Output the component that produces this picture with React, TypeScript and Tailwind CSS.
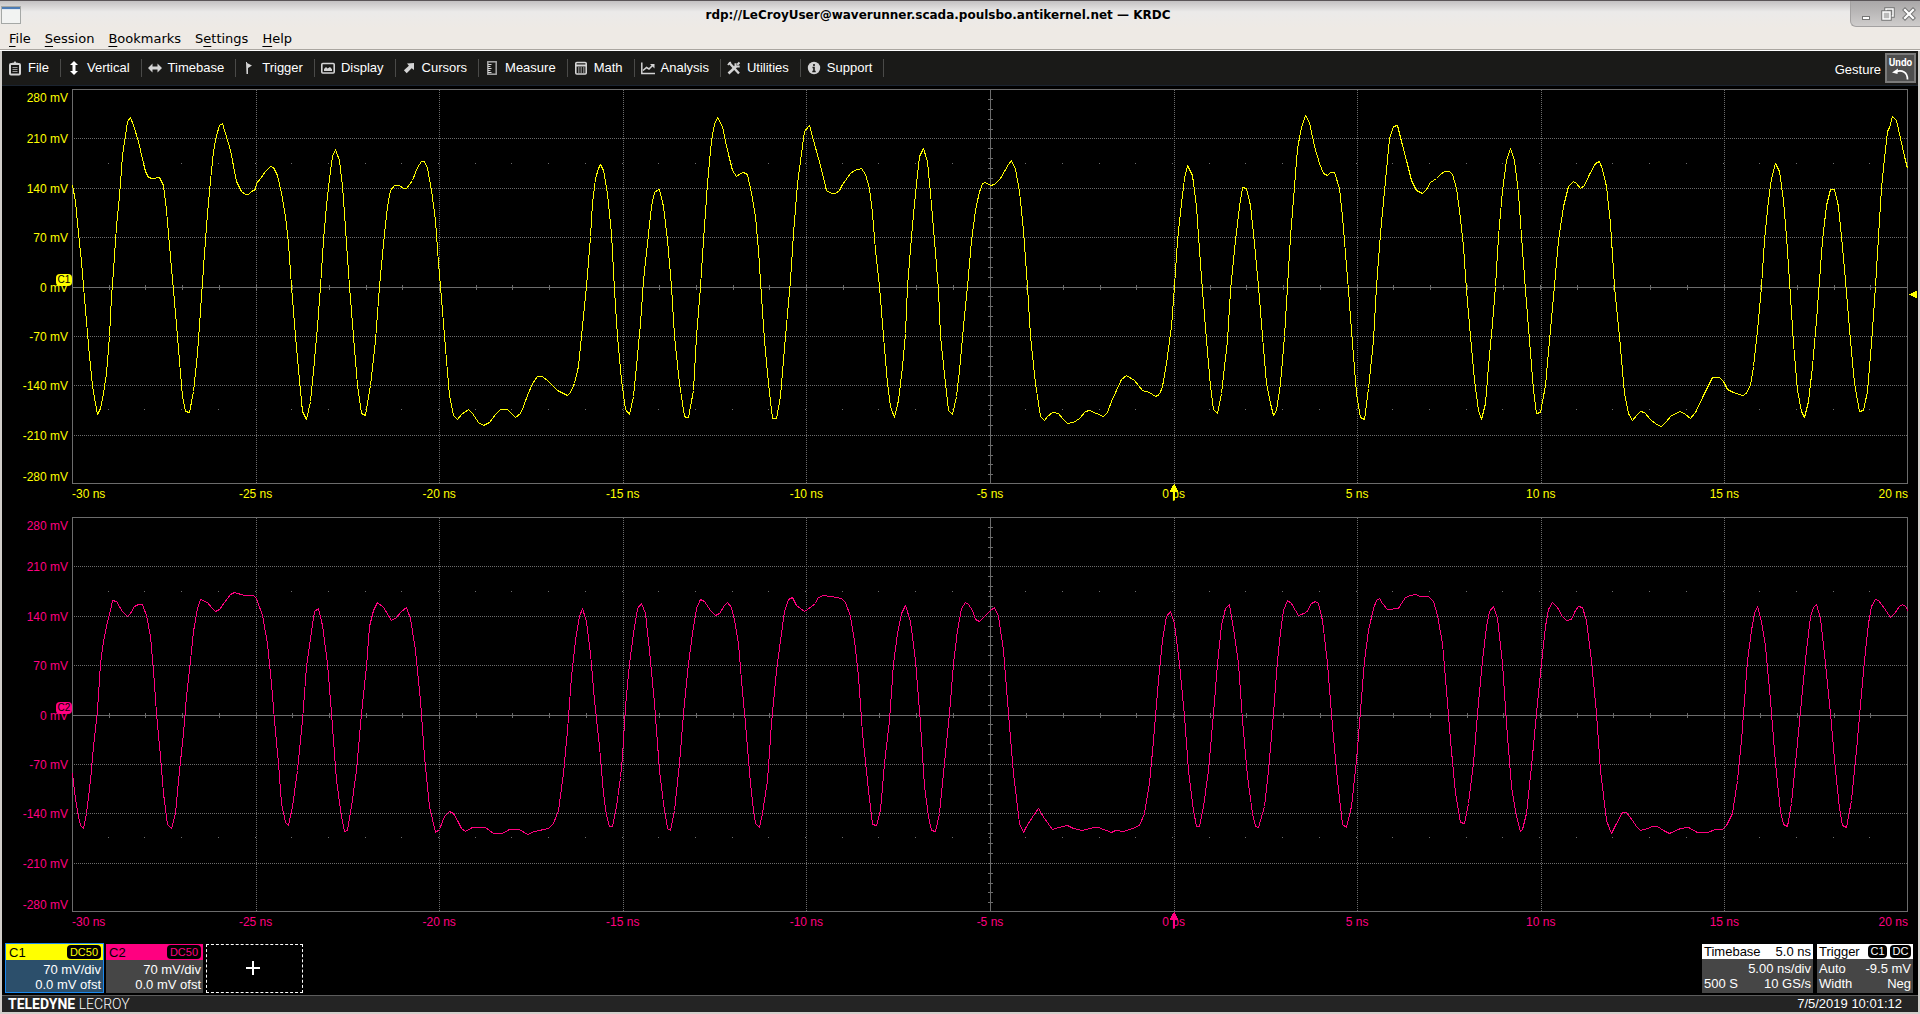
import type { ReactNode } from "react";

type Segment = { x: number; y: number; pitchX: number; pitchY: number; points: string };

const C1_TRACE: Segment[] = [
  {
    x: -12, y: 1, pitchX: 3, pitchY: 3,
    points:
      "37,287 46,335 55,430 64,515 70,590 79,695 88,800 97,885 106,940 113,972 121,955 130,910 138,850 147,740 154,620 160,540 169,410 178,320 187,195 195,135 203,95 211,83 221,105 235,155 250,220 257,245 266,262 278,265 298,262 309,285 319,360 328,465 340,600 352,740 360,850 368,920 377,964 388,967 400,905 411,790 423,620 432,490 441,370 450,270 459,185 468,135 477,105 486,100 497,130 510,180 530,275 543,303 555,314 564,312 575,304 587,297 589,280 600,265 615,245 630,229 641,232 652,255 664,310 675,380 685,460 694,590 706,740 717,870 728,965 739,988 751,935 760,845 771,710 781,590 790,450 799,345 808,265 818,200 826,177 838,210 847,290 853,370 860,460 869,590 881,740 892,885 904,970 915,976 931,885 946,750 958,590 969,460 982,350 992,300 1003,286 1018,287 1030,295 1040,294 1058,270 1072,232 1083,214 1093,214 1103,235 1115,300 1126,390 1135,520 1140,590 1150,700 1158,810 1168,915 1180,975 1192,987 1203,972 1225,959 1236,970 1255,998 1269,1005 1288,997 1305,972 1322,957 1343,957 1365,981",
  },
  {
    x: 448, y: 1, pitchX: 3, pitchY: 3,
    points:
      "0,970 10,950 22,915 38,880 53,859 68,860 85,874 111,900 143,915 152,908 163,880 174,830 184,740 199,590 211,440 218,340 227,265 235,235 241,222 250,240 262,310 273,430 284,600 293,740 305,870 317,958 328,972 340,920 350,830 360,700 371,570 382,460 393,350 404,308 414,297 418,298 430,350 441,450 453,590 464,740 478,880 493,980 500,982 506,982 519,900 530,740 541,590 550,450 561,280 575,150 584,103 593,81 607,108 617,155 628,205 638,242 650,259 660,250 670,246 682,252 695,310 706,380 715,480 724,620 734,750 746,880 758,984 768,985 782,920 797,740 810,570 820,430 831,280 843,190 853,123 868,107 880,150 900,225 920,300 935,310 947,310 958,302 968,284 990,250 1003,241 1023,236 1036,252 1048,295 1058,370 1067,480 1077,590 1090,740 1102,880 1112,950 1124,981 1136,930 1146,830 1156,730 1163,590 1174,440 1187,310 1199,200 1210,176 1222,215 1231,310 1243,450 1254,600 1262,740 1275,880 1286,960 1297,972 1309,920 1319,840 1330,710 1342,590 1355,450 1366,360 1378,305",
  },
  {
    x: 908, y: 1, pitchX: 3, pitchY: 3,
    points:
      "0,297 8,280 15,276 30,287 44,284 62,265 84,223 95,211 106,238 117,305 130,420 142,590 152,740 165,880 180,978 194,991 203,978 217,967 235,969 246,986 262,1000 281,997 297,985 315,964 328,961 350,969 370,979 382,968 395,933 408,900 425,868 440,856 462,872 488,900 508,907 526,919 537,914 548,890 560,820 573,710 583,590 592,450 603,340 613,265 623,225 636,255 649,350 658,480 667,600 679,750 690,890 701,958 712,970 724,910 741,750 752,600 766,450 777,350 788,292 798,296 811,345 824,460 834,590 847,740 859,880 870,940 879,976 889,960 902,880 913,740 922,590 932,440 943,290 952,175 963,112 977,75 988,98 1002,170 1018,220 1030,250 1041,256 1052,248 1063,247 1077,295 1088,380 1097,490 1106,600 1118,760 1130,910 1142,982 1153,987 1165,895 1179,750 1190,590 1201,430 1217,270 1229,145 1240,110 1252,107 1265,155 1280,210 1295,272 1310,300 1326,311 1340,298 1352,278 1370,264",
  },
  {
    x: 1368, y: 1, pitchX: 3, pitchY: 3,
    points:
      "0,254 12,245 27,244 37,252 48,295 58,360 70,470 80,600 92,740 103,870 114,960 125,988 136,940 146,830 157,700 167,590 176,440 188,300 200,210 211,174 223,210 235,310 244,440 255,600 267,750 279,900 290,970 301,967 315,885 329,750 341,620 355,450 370,350 386,290 400,275 410,280 421,294 432,287 448,252 465,220 477,214 488,237 499,290 511,400 523,590 537,740 553,910 565,970 577,991 588,975 602,964 612,966 630,987 648,1004 664,1009 680,993 690,979 705,969 720,964 735,974 752,985 765,967 790,915 817,863 838,863 850,875 862,898 880,906 908,917 917,912 930,885 940,830 951,720 963,590 974,450 984,330 994,265 1007,221 1019,245 1030,330 1040,440 1051,620 1060,760 1072,900 1083,965 1093,982 1105,935 1117,830 1128,690 1137,570 1148,450 1160,345 1172,298 1184,298 1194,350 1205,440 1217,570 1230,750 1243,880 1258,964 1270,962 1282,905 1293,760 1305,590 1315,440 1325,295 1333,205 1342,125 1348,112 1357,80 1368,92 1382,145 1392,200 1403,236",
  },
];

const C2_TRACE: Segment[] = [
  {
    x: -72, y: -17, pitchX: 2.45, pitchY: 3,
    points:
      "177,820 183,875 190,935 196,975 204,985 213,940 222,840 230,740 238,630 247,490 254,425 263,365 270,330 276,301 286,305 300,335 313,350 320,340 330,320 340,313 348,314 358,345 368,410 377,510 384,640 392,770 401,880 411,972 419,985 429,940 440,810 450,700 458,590 466,480 475,395 485,325 491,297 508,306 517,322 528,333 537,327 550,306 565,282 575,277 600,286 620,287 628,294 643,345 655,430 665,550 673,660 682,790 690,910 699,968 708,975 717,920 729,810 740,660 752,500 762,395 771,335 780,325 791,375 802,490 812,640 824,840 836,950 845,995 852,990 862,920 873,810 886,640 897,500 906,380 915,330 925,307 940,323 958,361 972,352 983,335 996,322 1006,355 1018,450 1030,600 1040,770 1053,920 1066,997 1076,987 1089,950 1101,933 1110,940 1122,962 1131,984 1141,994 1158,982 1190,982 1210,1000 1230,1000 1248,988 1272,988 1293,1003 1310,994 1343,984 1357,970 1368,930 1380,820 1390,690 1400,530 1410,420 1420,350 1427,325 1436,365 1447,460 1457,600 1468,740 1478,880 1486,945 1493,979 1500,979 1510,920",
  },
  {
    x: 548, y: -17, pitchX: 2.45, pitchY: 3,
    points:
      "0,832 6,770 14,620 24,490 33,400 43,325 52,309 62,340 72,450 84,610 96,810 106,910 117,985 124,992 134,930 146,790 156,640 168,490 178,400 187,325 197,299 206,304 222,330 235,347 243,340 255,315 263,306 273,322 281,360 290,430 298,540 308,670 319,850 326,930 333,970 342,982 350,940 361,840 372,670 384,510 395,400 404,335 413,298 422,292 432,316 451,335 460,328 478,309 485,294 495,286 518,290 543,296 552,306 564,350 575,420 584,530 595,700 608,870 618,973 628,976 637,930 649,790 660,660 671,490 681,400 690,340 699,316 711,365 723,480 735,670 747,860 757,950 763,990 772,995 783,940 795,790 807,640 817,490 828,390 837,325 846,306 855,312 864,330 872,357 881,364 895,346 908,330 917,322 927,350 940,450 953,640 965,820 978,970 989,997 997,980 1012,945 1026,924 1040,955 1059,989 1075,983 1097,975 1112,986 1134,991 1160,982 1172,982 1203,997 1215,990 1233,994 1255,985 1272,975 1284,940 1297,850 1308,720 1320,540 1330,420 1340,350 1348,334 1358,370 1370,490 1382,650 1392,810 1404,930 1413,980 1419,979 1430,920 1441,810 1453,640 1464,490 1474,375 1483,325 1493,314 1504,385 1516,490 1526,660 1538,830 1549,940 1556,979 1565,983",
  },
  {
    x: 1208, y: -17, pitchX: 2.45, pitchY: 3,
    points:
      "-39,920 -28,810 -16,640 -6,480 0,398 8,330 19,300 28,309 37,331 46,347 65,337 77,310 86,303 94,311 103,360 116,490 128,680 140,840 153,973 163,982 174,920 187,780 198,630 208,480 217,390 228,325 237,300 244,295 252,311 264,328 290,326 297,310 308,291 320,286 333,283 345,289 365,290 375,303 387,345 398,430 408,570 418,720 431,880 443,967 452,970 462,910 474,790 485,640 496,480 506,380 514,335 523,320 533,355 545,490 556,670 568,860 580,950 588,993 594,988 603,940 616,800 628,640 640,490 650,380 659,328 668,307 680,322 692,349 703,362 713,357 724,331 732,318 740,323 750,360 763,480 776,640 786,810 800,960 812,1000 822,975 840,937 848,937 864,960 874,980 884,991 900,984 912,978 924,980 940,992 955,1000 980,986 1001,981 1023,997 1048,997 1068,988 1085,988 1095,975 1108,940 1120,840 1130,720 1138,600 1146,480 1154,390 1162,340 1170,320 1180,365 1190,440 1202,600 1214,790 1225,935 1234,973 1243,978 1254,910 1266,760 1278,600 1290,450 1300,350 1306,323 1315,314 1325,355 1337,490 1348,640 1360,810 1370,925 1379,975 1388,982 1400,900 1412,750 1424,580 1434,450 1443,370 1450,320 1458,298 1466,300 1480,326 1496,353 1505,341 1517,318 1526,312 1532,320 1539,335",
  },
];

const toPolyline = (trace: Segment[]) =>
  trace
    .flatMap((s) =>
      s.points.split(" ").map((p) => {
        const [px, py] = p.split(",").map(Number);
        return `${Math.floor(px / s.pitchX + s.x) + 0.5},${Math.floor(py / s.pitchY + s.y) + 0.5}`;
      }),
    )
    .join(" ");

const GRID_X = [184, 367, 551, 734, 1102, 1285, 1469, 1652];
const GRID_Y = [49, 99, 148, 247, 296, 346];
const TICKS_X = Array.from({ length: 49 }, (_, i) => Math.round((i + 1) * 36.7));
const TICKS_Y = Array.from({ length: 39 }, (_, i) => Math.round((i + 1) * 9.88));

const VOLTS = ["280 mV", "210 mV", "140 mV", "70 mV", "0 mV", "-70 mV", "-140 mV", "-210 mV", "-280 mV"];
const TIMES = ["-30 ns", "-25 ns", "-20 ns", "-15 ns", "-10 ns", "-5 ns", "0 ps", "5 ns", "10 ns", "15 ns", "20 ns"];

function Plot({ trace, color, level }: { trace: Segment[]; color: string; level?: number }) {
  return (
    <svg
      viewBox="0 0 1836 395"
      preserveAspectRatio="none"
      className="block h-full w-full overflow-visible"
      shapeRendering="crispEdges"
      fill="none"
    >
      <g stroke="#6c6c6c">
        <g strokeDasharray="1 1">
          {GRID_X.map((x) => (
            <line key={x} x1={x + 0.5} x2={x + 0.5} y1={1} y2={394} />
          ))}
          {GRID_Y.map((y) => (
            <line key={y} y1={y + 0.5} y2={y + 0.5} x1={2} x2={1835} />
          ))}
        </g>
        <line x1={0} x2={1836} y1={198.5} y2={198.5} />
        <line x1={918.5} x2={918.5} y1={0} y2={395} />
        {TICKS_X.map((x) => (
          <g key={x}>
            <line x1={x + 0.5} x2={x + 0.5} y1={196} y2={201} />
            <line x1={x - 1} x2={x} y1={74.5} y2={74.5} />
            <line x1={x - 1} x2={x} y1={320.5} y2={320.5} />
          </g>
        ))}
        {TICKS_Y.map((y) => (
          <line key={y} x1={916} x2={921} y1={y + 0.5} y2={y + 0.5} />
        ))}
        <rect x={0.5} y={0.5} width={1835} height={394} />
      </g>
      <polyline points={toPolyline(trace)} stroke={color} strokeLinejoin="bevel" />
      <path d="M1102 395h1v2h1v2h1v2h1v2h-3v8h-2v-8h-3v-2h1v-2h1v-2h1z" fill={color} />
      {level !== undefined && (
        <path d={`M1837 ${level}h2v-1h2v-1h2v-1h2v7h-2v-1h-2v-1h-2v-1h-2z`} fill={color} />
      )}
    </svg>
  );
}

function Chart({ name, trace, color, text, badge, level }: {
  name: string; trace: Segment[]; color: string; text: string; badge: string; level?: number;
}) {
  return (
    <section aria-label={`Channel ${name}`} className={`flex min-h-0 flex-1 flex-col text-xs ${text}`}>
      <div className="flex min-h-0 flex-1 pr-[10px]">
        <div className="relative mt-px -mb-px flex w-[70px] shrink-0 flex-col pr-1 text-right leading-4">
          {VOLTS.map((v, i) => (
            <div
              key={v}
              className={
                i === 0
                  ? "flex min-h-0 flex-1 items-start justify-end"
                  : i === 8
                    ? "flex min-h-0 flex-1 items-end justify-end"
                    : "flex min-h-0 flex-[2] items-center justify-end"
              }
            >
              {v}
            </div>
          ))}
          <span
            className={`absolute right-0 bottom-1/2 mb-[2px] flex h-3 w-4 items-center justify-center rounded-sm text-[10px] leading-3 text-black ${badge}`}
          >
            {name}
          </span>
        </div>
        <div className="min-w-0 flex-1">
          <Plot trace={trace} color={color} level={level} />
        </div>
      </div>
      <div className="ml-[70px] mr-[10px] flex h-5 items-center">
        {TIMES.map((t, i) => (
          <div
            key={t}
            className={i === 0 ? "flex-1 text-left" : i === 10 ? "flex-1 text-right" : "flex-[2] text-center"}
          >
            {t}
          </div>
        ))}
      </div>
    </section>
  );
}

const Icon = ({ children }: { children: ReactNode }) => (
  <svg viewBox="0 0 16 16" className="h-4 w-4" fill="none" stroke="#d4d4d4" strokeWidth="1.6" aria-hidden="true">
    {children}
  </svg>
);

const TOOLS: [string, ReactNode][] = [
  ["File", <Icon key="i"><rect x="3" y="4" width="10" height="10.5" rx="1" strokeWidth="2" /><path d="M5 5V2.8h1.6L8 1l1.4 1.8H11V5z" fill="#d4d4d4" stroke="none" /><path d="M5.5 7.5h5M5.5 9.5h5M5.5 11.5h5" stroke="#9a9a9a" strokeWidth="1" /></Icon>],
  ["Vertical", <Icon key="i"><path d="M8 1l4 4H9.5v6H12l-4 4-4-4h2.500V5H4z" fill="#fff" stroke="none" /></Icon>],
  ["Timebase", <Icon key="i"><path d="M1 8l4.500-4.500v3h5v-3L15 8l-4.500 4.500v-3h-5v3z" fill="#d4d4d4" stroke="none" /></Icon>],
  ["Trigger", <Icon key="i"><path d="M5 2h1v1l5 2.500L7 8v6H5.500z" fill="#d4d4d4" stroke="none" /></Icon>],
  ["Display", <Icon key="i"><rect x="1.800" y="3.500" width="12.400" height="9.500" rx="1" /><path d="M4 11V9l2-2 1.500 1.500L10 7l2 2.200V11z" fill="#d4d4d4" stroke="none" /></Icon>],
  ["Cursors", <Icon key="i"><path d="M13 3v7l-2.300-1.700-5 5-2.800-3 5-4.600L6 3.500z" fill="#d4d4d4" stroke="none" /></Icon>],
  ["Measure", <Icon key="i"><rect x="3.800" y="1.800" width="8.400" height="12.400" strokeWidth="1.500" stroke="#a8a8a8" /><path d="M4 4.500h3.500M4 6.500h2.500M4 8.500h3.500M4 10.500h2.500M4 12.500h3.500" strokeWidth="1.200" /></Icon>],
  ["Math", <Icon key="i"><rect x="2.800" y="2.500" width="10.400" height="11.500" rx="1" /><path d="M3 5.500h10" strokeWidth="2" /><path d="M5 8h1.500M7.500 8H9M10 8h1.500M5 10h1.500M7.500 10H9M10 10h1.500M5 12h1.500M7.500 12H9M10 12h1.500" strokeWidth="1.200" /></Icon>],
  ["Analysis", <Icon key="i"><path d="M1.800 2.500v11H15" strokeWidth="1.500" /><path d="M3 10.500l3.500-3 2.500 1.500 3.500-3.500" /><path d="M10 4h4.500v4.500z" fill="#d4d4d4" stroke="none" /></Icon>],
  ["Utilities", <Icon key="i"><path d="M3 2.500l10 11" strokeWidth="2.400" /><path d="M2.500 13.500L10 6.500" strokeWidth="2.600" /><path d="M13.500 2.500l-2.200 2.200M9.500 3.200v3.300h4.200" strokeWidth="2" /><path d="M1.800 5l3-3" strokeWidth="1.500" /></Icon>],
  ["Support", <Icon key="i"><circle cx="8" cy="8" r="6.200" fill="#d4d4d4" stroke="none" /><path d="M8 4v2M6.500 7.500H8v4M6.300 11.500h3.400" stroke="#1a1a18" /></Icon>],
];

const MENUS: [string, string, string][] = [
  ["", "F", "ile"],
  ["", "S", "ession"],
  ["", "B", "ookmarks"],
  ["S", "e", "ttings"],
  ["", "H", "elp"],
];

function WindowFrame() {
  return (
    <header className="flex h-[51px] shrink-0 flex-col border-b border-white bg-[#eeeae5] font-['DejaVu_Sans',sans-serif] text-black">
      <div className="relative flex h-7 items-start border-t border-[#5a5558] bg-linear-to-b from-[#c3c1c2] via-[#ebeae9] via-40% to-[#eeeae5]">
        <svg viewBox="0 0 20 18" className="mt-[5px] ml-px h-[18px] w-5" aria-hidden="true">
          <rect x="0.500" y="0.500" width="19" height="17" fill="#f2f3f2" stroke="#a5a8a6" />
          <rect x="1" y="1" width="18" height="2" fill="#4d7cb5" />
          <rect x="1" y="3" width="18" height="1" fill="#dfe8f2" />
        </svg>
        <h1 className="absolute inset-x-0 top-[5px] mr-[44px] text-center text-[12px] leading-[18px] font-bold">
          rdp://LeCroyUser@waverunner.scada.poulsbo.antikernel.net — KRDC
        </h1>
        <div className="relative ml-auto flex h-[26px] w-[70px] items-center justify-between rounded-bl-md border-b border-l border-[#a3a1a1] bg-linear-to-b from-[#a9a7a8] to-[#cfcdcc] pr-[3px] pl-[7px]">
          <button aria-label="Minimize" className="flex h-4 w-4 items-center justify-center">
            <svg viewBox="0 0 14 14" className="h-3.5 w-3.5"><rect x="3.500" y="9.500" width="7" height="3" fill="#fff" stroke="#757575" /></svg>
          </button>
          <button aria-label="Restore" className="flex h-4 w-4 items-center justify-center">
            <svg viewBox="0 0 14 14" className="h-3.5 w-3.5" fill="none">
              <path d="M5 5V2h7v7H9" stroke="#757575" strokeWidth="3.500" />
              <path d="M5 4V2h7v7h-2" stroke="#fff" strokeWidth="1.500" />
              <rect x="2" y="5" width="7" height="7" stroke="#757575" strokeWidth="3.500" />
              <rect x="2" y="5" width="7" height="7" stroke="#fff" strokeWidth="1.500" fill="#bbb" />
            </svg>
          </button>
          <button aria-label="Close" className="flex h-4 w-4 items-center justify-center">
            <svg viewBox="0 0 14 14" className="h-3.5 w-3.5" fill="none">
              <path d="M3 3l8 8M11 3l-8 8" stroke="#757575" strokeWidth="4.200" strokeLinecap="square" />
              <path d="M3 3l8 8M11 3l-8 8" stroke="#fff" strokeWidth="2.200" strokeLinecap="square" />
            </svg>
          </button>
        </div>
      </div>
      <nav className="flex flex-1 items-center border-b border-[#aaa6a0] pl-[2px] text-[13px]">
        {MENUS.map(([pre, key, post]) => (
          <button key={pre + key + post} className="px-[7px] leading-4">
            {pre}
            <span className="underline underline-offset-[3px]">{key}</span>
            {post}
          </button>
        ))}
      </nav>
    </header>
  );
}

function Toolbar() {
  return (
    <nav className="flex h-[35px] shrink-0 items-center border-b border-[#1b2430] bg-[#1a1a18] text-[13px] text-white">
      {TOOLS.map(([label, icon]) => (
        <button key={label} className="flex h-[18px] items-center border-r border-[#4a4a48] pr-[11px]">
          <span className="flex w-[26px] justify-center">{icon}</span>
          {label}
        </button>
      ))}
      <span className="mr-1 ml-auto pt-1">Gesture</span>
      <button className="mr-[2px] flex h-[30px] w-[31px] flex-col items-center border-2 border-[#7b7b7b] bg-[#4e4e4e] pt-[2px] font-[Roboto,sans-serif] text-[10px] leading-[11px] font-bold">
        Undo
        <svg viewBox="0 0 18 12" className="h-3 w-[18px]" fill="none" aria-hidden="true">
          <path d="M4 3.500c6-1.500 11.500 0 11.500 8" stroke="#fff" strokeWidth="1.700" />
          <path d="M0 4.500L6 .5 5.500 6z" fill="#fff" />
        </svg>
      </button>
    </nav>
  );
}

function ChannelTile({ name, header, badgeText, body }: { name: string; header: string; badgeText: string; body: string }) {
  return (
    <button className={`flex h-[50px] flex-col text-right text-[13px] leading-[15px] ${body}`}>
      <span className={`flex h-4 w-full items-center justify-between pl-[3px] pr-[2px] ${header}`}>
        {name}
        <span className={`rounded-sm bg-black px-[3px] text-[11px] leading-[14px] ${badgeText}`}>DC50</span>
      </span>
      <span className="w-full pt-[2px] pr-[2px] text-white">
        70 mV/div
        <br />
        0.0 mV ofst
      </span>
    </button>
  );
}

function InfoBar() {
  return (
    <footer className="flex h-[52px] shrink-0 items-start gap-[2px] pr-[5px] pl-[3px] text-[13px] leading-[15px] text-white">
      <ChannelTile
        name="C1"
        header="bg-[#ffff00] text-black"
        badgeText="text-[#ffff00]"
        body="w-[99px] border border-[#1a88ee] bg-[#2c4f6b] outline -outline-offset-1 outline-[#1a88ee]"
      />
      <ChannelTile
        name="C2"
        header="bg-[#ff0080] text-black"
        badgeText="text-[#ff0080]"
        body="w-[97px] border-t border-black bg-[#464646]"
      />
      <button
        aria-label="Add channel"
        className="mt-px ml-px flex h-[49px] w-[97px] items-center justify-center border border-dashed border-white pr-[3px] pb-[2px]"
      >
        <svg viewBox="0 0 14 14" className="h-3.5 w-3.5" aria-hidden="true">
          <path d="M7 0v14M0 7h14" stroke="#fff" strokeWidth="2" />
        </svg>
      </button>
      <button className="mt-px ml-auto flex h-[49px] w-[111px] flex-col bg-[#464646]">
        <span className="flex w-full justify-between bg-white px-[2px] text-black">
          <span>Timebase</span>
          <span>5.0 ns</span>
        </span>
        <span className="flex w-full justify-end px-[2px] pt-[2px]">5.00 ns/div</span>
        <span className="flex w-full justify-between px-[2px]">
          <span>500 S</span>
          <span>10 GS/s</span>
        </span>
      </button>
      <button className="mt-px ml-[2px] flex h-[49px] w-[96px] flex-col bg-[#464646]">
        <span className="flex w-full items-center gap-[3px] bg-white pr-[2px] pl-[2px] text-black">
          <span className="mr-auto">Trigger</span>
          <span className="w-[19px] rounded-sm bg-black text-center text-[11px] leading-[13px] text-white">C1</span>
          <span className="w-[21px] rounded-sm bg-black text-center text-[11px] leading-[13px] text-white">DC</span>
        </span>
        <span className="flex w-full justify-between px-[2px] pt-[2px]">
          <span>Auto</span>
          <span>-9.5 mV</span>
        </span>
        <span className="flex w-full justify-between px-[2px]">
          <span>Width</span>
          <span>Neg</span>
        </span>
      </button>
    </footer>
  );
}

export default function App() {
  return (
    <div className="flex h-screen flex-col bg-black font-['Liberation_Sans',Arial,sans-serif]">
      <WindowFrame />
      <div className="flex min-h-0 flex-1 flex-col border-x-2 border-b-2 border-[#d2cfcb]">
        <Toolbar />
        <main className="flex min-h-0 flex-1 flex-col gap-[13px] pt-[3px] pb-[11px]">
          <Chart name="C1" trace={C1_TRACE} color="#ffff00" text="text-[#ffff00]" badge="bg-[#ffff00]" level={205} />
          <Chart name="C2" trace={C2_TRACE} color="#ff0080" text="text-[#ff0080]" badge="bg-[#ff0080]" />
        </main>
        <InfoBar />
        <div className="flex h-[17px] shrink-0 items-center justify-between border-t border-[#5c5c5c] bg-[#242424] pr-4 pl-[6px] text-[13px] leading-4 text-white">
          <span className="font-[Roboto,sans-serif] text-sm leading-4">
            <b>TELEDYNE</b> <span className="font-light">LECROY</span>
          </span>
          <time>7/5/2019 10:01:12</time>
        </div>
      </div>
    </div>
  );
}
